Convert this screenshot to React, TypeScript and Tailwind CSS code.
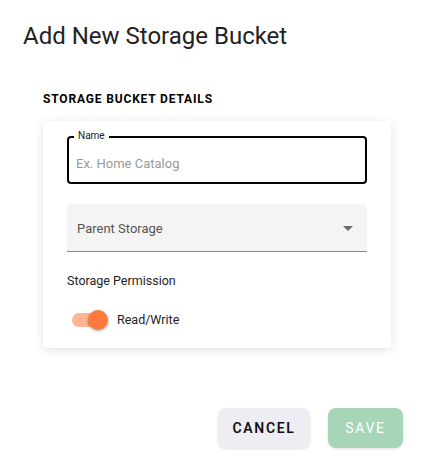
import { useState } from 'react'

export default function App() {
  const [rw, setRw] = useState(true)

  return (
    <div className="w-[433px] h-[476px] bg-white font-['Roboto','Liberation_Sans',sans-serif] text-[#1f1f1f]">
      <h1 className="pt-[20px] pl-[23px] text-[24px] leading-8 font-normal text-[#222]">
        Add New Storage Bucket
      </h1>

      <div className="pl-[43px] mt-[39px]">
        <h2 className="text-[12px] leading-4 font-bold tracking-[0.07em] text-black">
          STORAGE BUCKET DETAILS
        </h2>

        <div className="mt-[14px] w-[348px] rounded-[4px] bg-white shadow-[0_2px_10px_rgba(0,0,0,0.12)] pl-[24px] pr-[24px] pt-[15px] pb-[18px]">
          {/* Name field */}
          <div className="relative h-[48px] w-[300px] rounded-[4px] border-2 border-black">
            <span className="absolute -top-[8px] left-[5px] bg-white px-[4px] text-[10px] leading-3 font-normal text-[#222]">
              Name
            </span>
            <input
              className="h-full w-full bg-transparent pl-[7px] pt-[6px] text-[13px] text-[#333] outline-none placeholder:text-[#9a9a9a]"
              placeholder="Ex. Home Catalog"
            />
          </div>

          {/* Parent storage */}
          <div className="mt-[20px] flex h-[48px] w-[300px] items-center justify-between rounded-t-[4px] border-b border-[#8c8c8c] bg-[#f4f4f4] pl-[10px] pr-[14px] pt-[2px]">
            <span className="text-[13px] text-[#555]">Parent Storage</span>
            <svg width="10" height="5" viewBox="0 0 10 5">
              <path d="M0 0 L10 0 L5 5 Z" fill="#6b6b6b" />
            </svg>
          </div>

          <p className="mt-[21px] text-[12.5px] leading-4 text-[#222]">Storage Permission</p>

          <label className="mt-[21px] flex items-center gap-[9px] cursor-pointer" onClick={() => setRw(!rw)}>
            <span className="relative ml-[5px] flex h-[20px] w-[36px] items-center">
              <span className={`h-[14px] w-[34px] rounded-full ${rw ? 'bg-[#ffb592]' : 'bg-[#bdbdbd]'}`} />
              <span
                className={`absolute top-0 h-[20px] w-[20px] rounded-full shadow-[0_1px_3px_rgba(0,0,0,0.35)] ${
                  rw ? 'left-[16px] bg-[#ff7a3c]' : 'left-0 bg-white'
                }`}
              />
            </span>
            <span className="text-[12.5px] text-[#222]">Read/Write</span>
          </label>
        </div>
      </div>

      <div className="mt-[60px] flex justify-end gap-[18px] pr-[30px]">
        <button className="h-[40px] w-[92px] rounded-[8px] bg-[#efedf4] text-[14px] font-semibold tracking-[0.12em] text-[#111] shadow-[0_1px_3px_rgba(0,0,0,0.12)]">
          CANCEL
        </button>
        <button className="h-[40px] w-[75px] rounded-[8px] bg-[#a6d5b8] text-[14px] font-normal tracking-[0.12em] text-white shadow-[0_1px_3px_rgba(0,0,0,0.12)]">
          SAVE
        </button>
      </div>
    </div>
  )
}
